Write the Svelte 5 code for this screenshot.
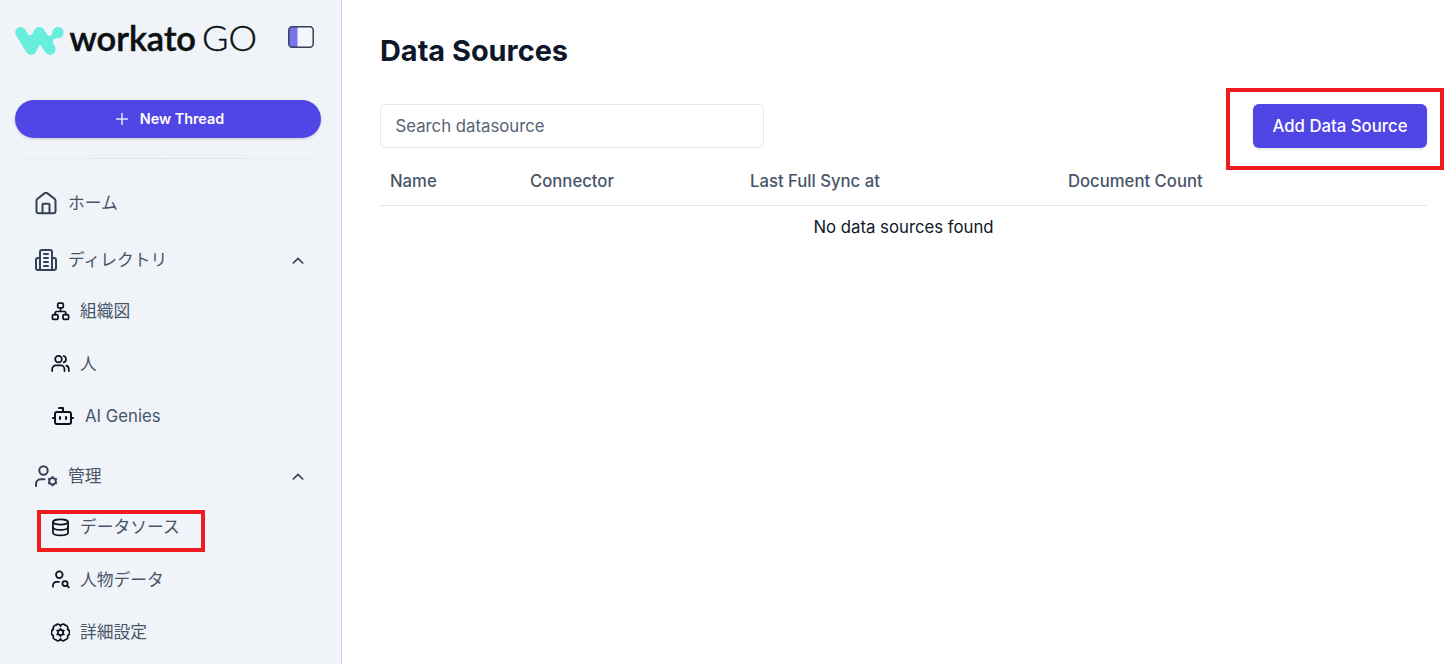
<script>
  const directory = [
    { icon: 'org', label: '組織図' },
    { icon: 'people', label: '人' },
    { icon: 'bot', label: 'AI Genies' }
  ];
  const admin = [
    { icon: 'database', label: 'データソース', active: true },
    { icon: 'search', label: '人物データ' },
    { icon: 'settings', label: '詳細設定' }
  ];
</script>

{#snippet icon(name)}
  <svg class="icon {name}" viewBox="0 0 24 24" fill="none" stroke="currentColor" stroke-width="2" stroke-linecap="round" stroke-linejoin="round" aria-hidden="true">
    {#if name === 'home'}
      <path d="M2.500 9.800c0-.9.300-1.500 1-2.100L10.800 2.100a2 2 0 0 1 2.400 0l7.300 5.600c.7.600 1 1.200 1 2.100V20a2.300 2.300 0 0 1-2.300 2.300H4.800A2.300 2.300 0 0 1 2.500 20z" />
      <path d="M8.500 22v-8.200c0-.7.400-1.100 1.100-1.100h4.800c.7 0 1.100.4 1.100 1.100V22" />
    {:else if name === 'building'}
      <path d="M6 22V4c0-1.100.9-2 2-2h8a2 2 0 0 1 2 2v18Z" />
      <path d="M6 10H4a2 2 0 0 0-2 2v8c0 1.100.9 2 2 2h2M18 10h2a2 2 0 0 1 2 2v8a2 2 0 0 1-2 2h-2" />
      <path d="M10 6h4M10 10h4M10 14h4M10 18h4" />
    {:else if name === 'org'}
      <rect x="1.800" y="16" width="7" height="6" rx="1.500" />
      <rect x="15.200" y="16" width="7" height="6" rx="1.500" />
      <rect x="8.500" y="1.500" width="7" height="6" rx="1.500" />
      <path d="M5.300 16v-2a2 2 0 0 1 2-2h9.400a2 2 0 0 1 2 2v2M12 7.500V12" />
    {:else if name === 'people'}
      <circle cx="9.500" cy="6.500" r="4.200" />
      <path d="M1.500 21.500v-2.500a4.500 4.500 0 0 1 4.500-4.500h6.500A4.500 4.500 0 0 1 17 19v2.500" />
      <path d="M16 2.500a4.200 4.200 0 0 1 0 8M22.500 21.500v-2.500a4.500 4.500 0 0 0-3.200-4.300" />
    {:else if name === 'bot'}
      <path d="M12 8V4H8" />
      <rect x="4" y="8" width="16" height="12" rx="2" />
      <path d="M2 14h2M20 14h2M15 13v2M9 13v2" />
    {:else if name === 'admin'}
      <circle cx="9.500" cy="6.500" r="4.200" />
      <path d="M2 22v-2.200A4.500 4.500 0 0 1 6.500 15.300H10.500" />
      <circle cx="18.500" cy="17.200" r="3.300" />
      <g stroke-linecap="butt"><path d="M18.500 12.200v2M18.500 20.200v2M22.800 14.700l-1.700 1M15.900 18.700l-1.700 1M14.200 14.700l1.700 1M21.100 18.700l1.700 1" /></g>
    {:else if name === 'database'}
      <ellipse cx="12" cy="5" rx="9.500" ry="3.300" />
      <path d="M2.500 5v13.500c0 1.900 4.200 3.300 9.500 3.300s9.500-1.400 9.500-3.300V5" />
      <path d="M2.500 11.800c0 1.900 4.200 3.300 9.500 3.300s9.500-1.400 9.500-3.300" />
    {:else if name === 'search'}
      <circle cx="10.500" cy="6" r="4.200" />
      <path d="M2.500 21v-1.500A4.500 4.500 0 0 1 7 15h3" />
      <circle cx="17.700" cy="17.200" r="3.300" />
      <path d="m20.300 19.700 2.200 2.200" />
    {:else if name === 'settings'}
      <path d="M12 4A3.300 3.300 0 0 0 6.200 2.800 3.800 3.800 0 0 0 3 8a4.400 4.400 0 0 0 0 8 3.800 3.800 0 0 0 3.200 5.200A3.300 3.300 0 0 0 12 20a3.300 3.300 0 0 0 5.800 1.200A3.800 3.800 0 0 0 21 16a4.400 4.400 0 0 0 0-8 3.800 3.800 0 0 0-3.200-5.200A3.300 3.300 0 0 0 12 4" />
      <circle cx="12" cy="12" r="3.300" />
      <path d="M12 8V7M12 17v-1M15.700 9.800l.6-.3M7.700 14.500l.6-.3M15.700 14.200l.6.300M7.700 9.500l.6.300" />
    {/if}
  </svg>
{/snippet}

{#snippet section(name, label, items)}
  <div class="row group">
    {@render icon(name)}
    <span class="ja">{label}</span>
    <svg class="chevron" viewBox="0 0 12 8" fill="none" stroke="currentColor" stroke-width="1.700" aria-hidden="true"><path d="M.8 6.500 6 1.500 11.200 6.500" /></svg>
  </div>
  {#each items as item}
    <div class="row child">
      {@render icon(item.icon)}
      <span class:ja={item.icon !== 'bot'}>{item.label}</span>
      {#if item.active}<i class="mark"></i>{/if}
    </div>
  {/each}
{/snippet}

<div class="page">
  <aside>
    <header>
      <svg class="logo" viewBox="0 -8 246 52" width="246" height="52" role="img" aria-label="workato GO">
        <path fill="none" stroke="#67eedc" stroke-width="11" stroke-linecap="round" stroke-linejoin="round" d="M5.700 12.500 16 29.300 24.300 12.500 35 29.300" />
        <path fill="#67eedc" d="M10.500 11C12.500 17 17.500 17 19.300 10L29.300 10C31.500 15.500 34.500 17 37 14.500L38.500 10.500 44 18C39.500 18 37 19.500 38 23L40.300 28 35 33 29.500 30C28 23.500 23.500 23.500 21.500 30L16 33 8 20z" />
        <circle cx="43" cy="12.500" r="5.600" fill="#67eedc" />
        <text class="brand" x="54.500" y="31" textLength="126.500" lengthAdjust="spacingAndGlyphs">workato</text>
        <text class="go" x="187" y="31" textLength="55" lengthAdjust="spacingAndGlyphs">GO</text>
      </svg>
      <svg class="panel" viewBox="0 0 26 22" width="26" height="22" aria-hidden="true">
        <rect x=".8" y=".8" width="24.400" height="20.400" rx="3.500" fill="#f4f6fb" />
        <path d="M4.300.8H9.500v20.400H4.300A3.500 3.500 0 0 1 .8 17.700V4.300A3.500 3.500 0 0 1 4.300.8z" fill="#7b72ee" />
        <rect x=".8" y=".8" width="24.400" height="20.400" rx="3.500" fill="none" stroke="#334155" stroke-width="1.500" />
      </svg>
    </header>
    <button class="thread">
      <svg viewBox="0 0 12 12" width="12" height="12" stroke="#e6e5ff" stroke-width="1.500" aria-hidden="true"><path d="M6 0v12M0 6h12" /></svg>
      <span>New Thread</span>
    </button>
    <div class="divider"></div>
    <nav>
      <div class="row">{@render icon('home')}<span class="ja">ホーム</span></div>
      {@render section('building', 'ディレクトリ', directory)}
      {@render section('admin', '管理', admin)}
    </nav>
  </aside>

  <main>
    <h1>Data Sources</h1>
    <div class="toolbar">
      <input type="text" placeholder="Search datasource" />
      <div class="action">
        <button class="add">Add Data Source</button>
        <i class="mark"></i>
      </div>
    </div>
    <div class="table">
      <div class="head">
        <span>Name</span><span>Connector</span><span>Last Full Sync at</span><span>Document Count</span>
      </div>
      <div class="empty">No data sources found</div>
    </div>
  </main>
</div>

<style>
  :global(body) { background: #fff; }
  .page {
    display: flex;
    height: 664px;
    overflow: hidden;
    font-family: Inter, "Noto Sans CJK JP", sans-serif;
    font-size: 16.750px;
    color: #0f172a;
  }
  * { box-sizing: border-box; }
  button, input { font: inherit; }
  aside {
    width: 342px;
    flex: none;
    padding: 12px 20px 0 15px;
    background: #f0f4f9;
    border-right: 1px solid #c5d3e2;
  }
  header { display: flex; height: 88px; align-items: flex-start; gap: 27px; }
  .logo { flex: none; }
  .panel { flex: none; margin-top: 14px; }
  .brand { font: 600 34px Lato, sans-serif; fill: #0d1012; stroke: #0d1012; stroke-width: .5px; }
  .go { font: 300 34.500px Lato, sans-serif; fill: #0d1012; stroke: #0d1012; stroke-width: .4px; }
  .thread {
    display: flex;
    align-items: center;
    justify-content: center;
    gap: 12px;
    width: 306px;
    height: 38px;
    padding: 0 0 0 4px;
    border: 0;
    border-radius: 19px;
    background: #4f46e5;
    color: #fff;
    font-size: 14.400px;
    font-weight: 600;
    box-shadow: 0 1px 3px #1e293b33;
  }
  .thread span { padding-bottom: 1px; }
  .divider { width: 306px; height: 1px; margin-top: 20px; background: linear-gradient(90deg, #e9eef6, #dbe3f3, #e9eef6); }
  nav { padding-top: 19px; }
  .row {
    position: relative;
    display: flex;
    align-items: center;
    height: 50px;
    padding-left: 19px;
    gap: 10px;
    color: #475569;
    white-space: nowrap;
  }
  .ja { padding-bottom: 2px; }
  .group { margin-top: 7px; }
  .child + .group { margin-top: 8.500px; }
  .child { height: 52.500px; padding-left: 36px; }
  .icon { width: 24px; height: 24px; flex: none; color: #334155; }
  .child .icon { width: 19px; height: 19px; color: #0b1220; stroke-width: 2.200; }
  .child .bot { width: 24px; height: 24px; stroke-width: 2; }
  .chevron { width: 12px; height: 8px; margin: 1px 17px 0 auto; color: #334155; }
  .mark { position: absolute; border: 4px solid #ee1c1f; pointer-events: none; }
  .child .mark { left: 22px; top: 9px; width: 168px; height: 42px; }
  main { flex: 1; padding: 33px 25px 0 38px; }
  h1 { margin: 0; height: 71px; font-size: 28.900px; line-height: 36px; font-weight: 700; }
  .toolbar { display: flex; justify-content: space-between; height: 44px; }
  input {
    width: 384px;
    height: 44px;
    padding: 0 14.500px;
    border: 1px solid #e2e8f0;
    border-radius: 5px;
    background: #fff;
    outline: 0;
  }
  input::placeholder { color: #566375; opacity: 1; }
  .action { position: relative; }
  .add {
    width: 174px;
    height: 44px;
    padding: 0;
    border: 0;
    border-radius: 6px;
    background: #4f46e5;
    color: #fff;
    font-weight: 500;
    box-shadow: 0 1px 3px #1e293b26;
  }
  .action .mark { left: -27px; top: -16px; width: 218px; height: 82px; }
  .head {
    display: grid;
    grid-template-columns: 140px 220px 318px 1fr;
    height: 58px;
    padding: 9px 10px 0;
    align-items: center;
    border-bottom: 1px solid #e2e8f0;
    color: #475569;
    font-size: 16.700px;
    font-weight: 500;
  }
  .empty { height: 43px; line-height: 43px; text-align: center; }
</style>
